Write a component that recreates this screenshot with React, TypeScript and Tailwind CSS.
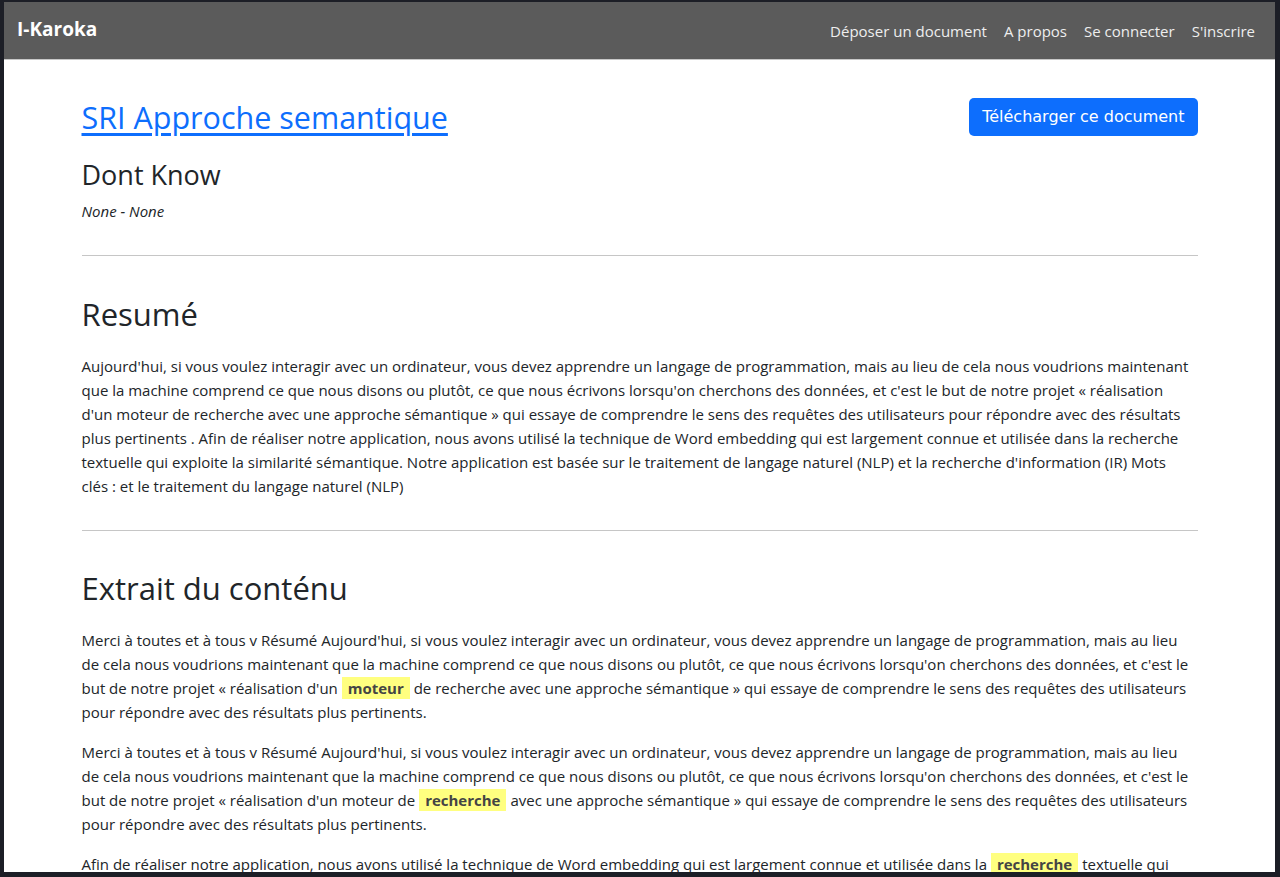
const resume =
  "Aujourd'hui, si vous voulez interagir avec un ordinateur, vous devez apprendre un langage de programmation, mais au lieu de cela nous voudrions maintenant que la machine comprend ce que nous disons ou plutôt, ce que nous écrivons lorsqu'on cherchons des données, et c'est le but de notre projet « réalisation d'un moteur de recherche avec une approche sémantique » qui essaye de comprendre le sens des requêtes des utilisateurs pour répondre avec des résultats plus pertinents . Afin de réaliser notre application, nous avons utilisé la technique de Word embedding qui est largement connue et utilisée dans la recherche textuelle qui exploite la similarité sémantique. Notre application est basée sur le traitement de langage naturel (NLP) et la recherche d'information (IR) Mots clés\u00a0: et le traitement du langage naturel (NLP)";

function Mark({ children }: { children: React.ReactNode }) {
  return <mark className="bg-[#ffff80] px-[6px] py-[1px] font-bold text-[#444]">{children}</mark>;
}

const extraits: [string, string, string][] = [
  [
    "Merci à toutes et à tous v Résumé Aujourd'hui, si vous voulez interagir avec un ordinateur, vous devez apprendre un langage de programmation, mais au lieu de cela nous voudrions maintenant que la machine comprend ce que nous disons ou plutôt, ce que nous écrivons lorsqu'on cherchons des données, et c'est le but de notre projet « réalisation d'un ",
    "moteur",
    " de recherche avec une approche sémantique » qui essaye de comprendre le sens des requêtes des utilisateurs pour répondre avec des résultats plus pertinents.",
  ],
  [
    "Merci à toutes et à tous v Résumé Aujourd'hui, si vous voulez interagir avec un ordinateur, vous devez apprendre un langage de programmation, mais au lieu de cela nous voudrions maintenant que la machine comprend ce que nous disons ou plutôt, ce que nous écrivons lorsqu'on cherchons des données, et c'est le but de notre projet « réalisation d'un moteur de ",
    "recherche",
    " avec une approche sémantique » qui essaye de comprendre le sens des requêtes des utilisateurs pour répondre avec des résultats plus pertinents.",
  ],
  [
    "Afin de réaliser notre application, nous avons utilisé la technique de Word embedding qui est largement connue et utilisée dans la ",
    "recherche",
    " textuelle qui exploite la similarité sémantique. Notre application est basée sur le traitement de langage naturel (NLP) et la recherche d'information (IR).",
  ],
];

export default function App() {
  return (
    <div className="h-[877px] overflow-hidden bg-[#1c1e26] pl-[4px] pr-[5px] pt-[2px] pb-[5px]" style={{ fontFamily: "'Open Sans', 'Noto Sans', sans-serif" }}>
      <div className="h-full overflow-hidden bg-white text-[#212529]">
        <nav className="flex h-[58px] items-center justify-between border-b border-[#c8c8c8] bg-[#5b5b5b] pl-[13px] pr-[20px]">
          <a className="-mt-[3px] text-[19px] font-bold text-white">I-Karoka</a>
          <div className="mt-[1px] flex gap-[17px] text-[15px] text-[#eeeeee]">
            <a>Déposer un document</a>
            <a>A propos</a>
            <a>Se connecter</a>
            <a>S'inscrire</a>
          </div>
        </nav>

        <main className="mx-auto w-[1140px] px-[12px] pt-[37px] text-[15px] leading-[24px]">
          <div className="flex items-start justify-between">
            <a className="text-[30.5px] leading-[40px] text-[#0d6efd] underline underline-offset-[4px]">SRI Approche semantique</a>
            <button className="mt-[1px] rounded-[5px] bg-[#0d6efd] px-[13px] py-[7px] text-[16px] leading-[24px] text-white" style={{ fontFamily: "'DejaVu Sans', sans-serif" }}>
              Télécharger ce document
            </button>
          </div>
          <h3 className="mt-[21px] text-[27px] leading-[34px]">Dont Know</h3>
          <p className="mt-[7px] italic">None - None</p>
          <hr className="mt-[32px] border-[#c6c6c6]" />

          <h2 className="mt-[38px] text-[31px] leading-[40px]">Resumé</h2>
          <p className="mt-[20px]">{resume}</p>
          <hr className="mt-[32px] border-[#c6c6c6]" />

          <h2 className="mt-[37px] text-[31px] leading-[40px]">Extrait du conténu</h2>
          <div className="mt-[20px] flex flex-col gap-[16px]">
            {extraits.map((e, i) => (
              <p key={i}>
                {e[0]}
                <Mark>{e[1]}</Mark>
                {e[2]}
              </p>
            ))}
          </div>
        </main>
      </div>
    </div>
  );
}
